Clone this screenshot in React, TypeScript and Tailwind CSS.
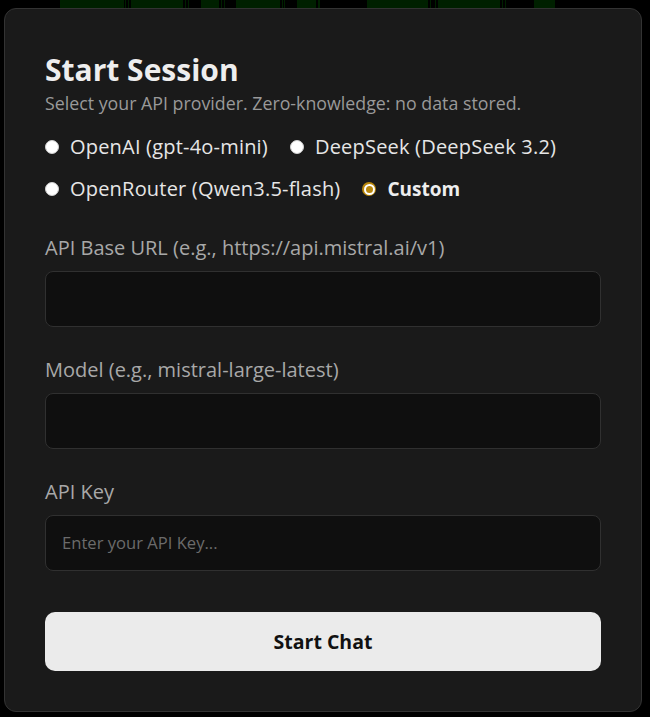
import React from "react";

const stripes: [number, number][] = [
  [60, 124], [125, 126], [128, 129], [131, 183], [185, 186], [188, 189],
  [201, 219], [221, 222], [224, 225], [236, 280], [282, 283], [284, 285],
  [297, 316], [318, 320], [367, 428], [430, 431], [435, 436], [438, 500],
  [502, 503], [505, 506], [534, 555],
];

function Radio({ checked }: { checked?: boolean }) {
  if (checked) {
    return (
      <span className="flex h-[14px] w-[14px] shrink-0 rounded-full bg-[#b8860b] p-[1.5px]">
        <span className="flex h-full w-full rounded-full bg-white p-[2px]">
          <span className="h-full w-full rounded-full bg-[#b8860b]" />
        </span>
      </span>
    );
  }
  return <span className="h-[14px] w-[14px] shrink-0 rounded-full border border-[#d0d0d0] bg-white" />;
}

function Option({ label, checked }: { label: string; checked?: boolean }) {
  return (
    <label className="flex items-center gap-[11px]">
      <Radio checked={checked} />
      <span className={checked ? "text-[19px] font-bold text-[#eeeeee]" : "tracking-[0.2px] text-[#e6e6e6]"}>{label}</span>
    </label>
  );
}

function Field({ label, placeholder }: { label: string; placeholder?: string }) {
  return (
    <div className="flex flex-col">
      <div className="mb-[11px] text-[20px] leading-[24px] text-[#a8a8a8]">{label}</div>
      <div className="flex h-[56px] items-center rounded-lg border border-[#303030] bg-[#0f0f0f] px-4 text-[16.6px] text-[#6b6b6b]">
        {placeholder}
      </div>
    </div>
  );
}

export default function App() {
  return (
    <div
      className="relative min-h-screen bg-black pt-2 pl-1"
      style={{ fontFamily: '"Open Sans", "Noto Sans", sans-serif' }}
    >
      <div className="absolute left-0 top-0 h-2 w-full">
        {stripes.map(([a, b], i) => (
          <div
            key={i}
            className="absolute top-0 h-2 bg-[#002000]"
            style={{ left: a, width: b - a }}
          />
        ))}
      </div>
      <div className="relative w-[638px] rounded-xl border border-[#333333] bg-[#1a1a1a] p-10">
        <div className="text-[30px] font-bold leading-[42px] text-[#eeeeee]">Start Session</div>
        <div className="text-[17.8px] leading-[24px] text-[#999999]">
          Select your API provider. Zero-knowledge: no data stored.
        </div>
        <div className="mt-[18px] flex flex-col gap-[14px] text-[20px] leading-[28px]">
          <div className="flex items-center gap-[22px]">
            <Option label="OpenAI (gpt-4o-mini)" />
            <Option label="DeepSeek (DeepSeek 3.2)" />
          </div>
          <div className="flex items-center gap-[22px]">
            <Option label="OpenRouter (Qwen3.5-flash)" />
            <Option label="Custom" checked />
          </div>
        </div>
        <div className="mt-[33px] flex flex-col gap-[31px]">
          <Field label="API Base URL (e.g., https://api.mistral.ai/v1)" />
          <Field label="Model (e.g., mistral-large-latest)" />
          <Field label="API Key" placeholder="Enter your API Key..." />
        </div>
        <button className="mt-[41px] flex h-[59px] w-full items-center justify-center rounded-[10px] bg-[#ebebeb] text-[19.5px] font-bold text-[#111111]">
          Start Chat
        </button>
      </div>
    </div>
  );
}
